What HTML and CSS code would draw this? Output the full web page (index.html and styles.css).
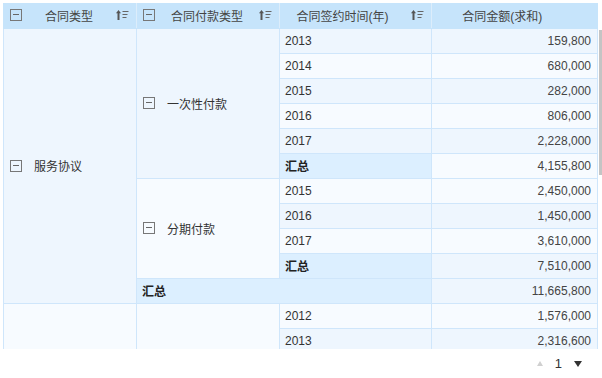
FILE: index.html
```html
<!DOCTYPE html>
<html lang="zh">
<head>
<meta charset="utf-8">
<link rel="stylesheet" href="styles.css">
</head>
<body>
<div class="wrap">
  <div class="viewport">
    <table class="pivot">
      <colgroup>
        <col class="w1"><col class="w2"><col class="w3"><col class="w4">
      </colgroup>
      <thead>
        <tr>
          <th><div class="hcell"><span class="box"></span><span class="htxt">合同类型</span><svg class="sort" width="13" height="10" viewBox="0 0 13 10"><path d="M2.5 10V2" stroke="#555" stroke-width="2"/><path d="M0 3.2L2.5 0L5 3.2Z" fill="#555"/><path d="M6.5 1.5H12.5M6.5 4.5H11.5M6.5 7.5H10.5" stroke="#666" stroke-width="1"/></svg></div></th>
          <th><div class="hcell"><span class="box"></span><span class="htxt">合同付款类型</span><svg class="sort" width="13" height="10" viewBox="0 0 13 10"><path d="M2.5 10V2" stroke="#555" stroke-width="2"/><path d="M0 3.2L2.5 0L5 3.2Z" fill="#555"/><path d="M6.5 1.5H12.5M6.5 4.5H11.5M6.5 7.5H10.5" stroke="#666" stroke-width="1"/></svg></div></th>
          <th><div class="hcell"><span class="htxt htxt3">合同签约时间(年)</span><svg class="sort" width="13" height="10" viewBox="0 0 13 10"><path d="M2.5 10V2" stroke="#555" stroke-width="2"/><path d="M0 3.2L2.5 0L5 3.2Z" fill="#555"/><path d="M6.5 1.5H12.5M6.5 4.5H11.5M6.5 7.5H10.5" stroke="#666" stroke-width="1"/></svg></div></th>
          <th><div class="hcell"><span class="htxt htxt4">合同金额(求和)</span></div></th>
        </tr>
      </thead>
      <tbody>
        <tr class="ra">
          <td rowspan="11" class="dim ga"><div class="dcell"><span class="box"></span><span>服务协议</span></div></td>
          <td rowspan="6" class="dim ga"><div class="dcell"><span class="box"></span><span>一次性付款</span></div></td>
          <td class="yr">2013</td><td class="num">159,800</td>
        </tr>
        <tr class="rb"><td class="yr">2014</td><td class="num">680,000</td></tr>
        <tr class="ra"><td class="yr">2015</td><td class="num">282,000</td></tr>
        <tr class="rb"><td class="yr">2016</td><td class="num">806,000</td></tr>
        <tr class="ra"><td class="yr">2017</td><td class="num">2,228,000</td></tr>
        <tr class="rb"><td class="yr sum">汇总</td><td class="num">4,155,800</td></tr>
        <tr class="rb">
          <td rowspan="4" class="dim gb"><div class="dcell"><span class="box"></span><span>分期付款</span></div></td>
          <td class="yr">2015</td><td class="num">2,450,000</td>
        </tr>
        <tr class="ra"><td class="yr">2016</td><td class="num">1,450,000</td></tr>
        <tr class="rb"><td class="yr">2017</td><td class="num">3,610,000</td></tr>
        <tr class="ra"><td class="yr sum">汇总</td><td class="num">7,510,000</td></tr>
        <tr class="ra"><td colspan="2" class="yr sum">汇总</td><td class="num">11,665,800</td></tr>
        <tr class="rb">
          <td rowspan="2" class="dim gb"></td>
          <td rowspan="2" class="dim gb"></td>
          <td class="yr">2012</td><td class="num">1,576,000</td>
        </tr>
        <tr class="ra"><td class="yr">2013</td><td class="num">2,316,600</td></tr>
      </tbody>
    </table>
    <div class="scrolltrack"><div class="thumb"></div></div>
  </div>
  <div class="pager">
    <span class="tri up"></span>
    <span class="pg">1</span>
    <span class="tri down"></span>
  </div>
</div>
</body>
</html>
```

FILE: styles.css
```css
* { box-sizing: border-box; }
html, body { margin: 0; padding: 0; background: #ffffff; }
body {
  font-family: "Liberation Sans", "Noto Sans CJK SC", sans-serif;
  font-size: 12px;
  color: #333;
}
.wrap { padding: 3px 0 0 3px; width: 602px; height: 378px; }
.viewport {
  position: relative;
  width: 599px;
  height: 346px;
  overflow: hidden;
}
.pivot {
  border-collapse: collapse;
  table-layout: fixed;
  width: 594px;
}
.w1 { width: 133px; }
.w2 { width: 143px; }
.w3 { width: 152px; }
.w4 { width: 166px; }
.pivot th {
  background: #c6e4fb;
  height: 25px;
  padding: 0;
  font-weight: normal;
  color: #444;
  border-left: 1px solid #dcedfb;
  border-bottom: 1px solid #c6e4fb;
}
.pivot th:first-child { border-left: 1px solid #c6e4fb; }
.hcell {
  display: flex;
  align-items: center;
  padding: 0 7px 0 6px;
  height: 24px;
}
.htxt { flex: 1; text-align: center; }
.htxt3 { padding-right: 12px; }
.htxt4 { padding-right: 24px; }
.box {
  width: 12px;
  height: 12px;
  border: 1px solid #777;
  position: relative;
  flex: none;
  background: transparent;
}
.box::after {
  content: "";
  position: absolute;
  left: 2px;
  right: 2px;
  top: 4px;
  height: 1px;
  background: #666;
}
.sort { flex: none; display: block; }
.pivot td {
  height: 25px;
  padding: 0;
  border: 1px solid #cfe6fb;
  white-space: nowrap;
}
.ra td { background: #eef6fe; }
.rb td { background: #f7fbff; }
.pivot td.dim { vertical-align: middle; }
.pivot td.ga { background: #eef6fe; }
.pivot td.gb { background: #f7fbff; }
.dcell { display: flex; align-items: center; gap: 12px; padding-left: 6px; }
.pivot td.yr { padding-left: 5px; }
.pivot td.num { text-align: right; padding-right: 6px; color: #444; }
.pivot td.sum { background: #dcefff; font-weight: bold; color: #222; }
.scrolltrack {
  position: absolute;
  right: 0;
  top: 25px;
  width: 3px;
  bottom: 0;
  background-image: radial-gradient(#dcdcdc 0.6px, transparent 0.7px);
  background-size: 2px 2px;
}
.thumb {
  margin-top: 2px;
  height: 145px;
  width: 3px;
  background: #c4c4c4;
}
.pager {
  display: flex;
  justify-content: flex-end;
  align-items: center;
  height: 29px;
  padding-right: 20px;
  gap: 12px;
}
.pg { color: #333; font-size: 13px; }
.tri { width: 0; height: 0; }
.tri.up { border-left: 3px solid transparent; border-right: 3px solid transparent; border-bottom: 5px solid #d0d0d0; }
.tri.down { border-left: 4.5px solid transparent; border-right: 4.5px solid transparent; border-top: 6px solid #333; }
```
